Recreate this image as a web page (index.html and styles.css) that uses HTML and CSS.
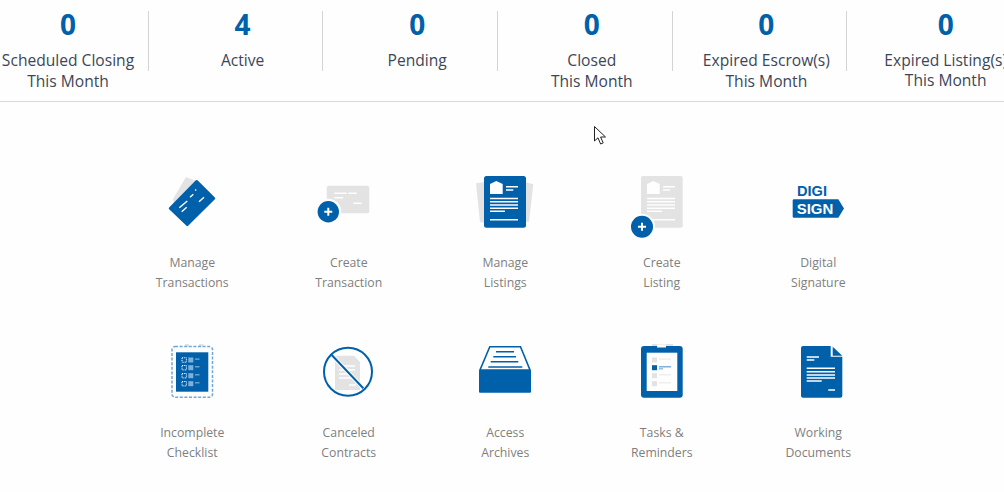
FILE: index.html
```html
<!DOCTYPE html>
<html lang="en">
<head>
<meta charset="utf-8">
<title>Dashboard</title>
<link rel="stylesheet" href="styles.css">
</head>
<body>
<header class="stats">
  <div class="stat"><div class="num">0</div><div class="lbl">Scheduled Closing<br>This Month</div></div>
  <div class="stat"><div class="num">4</div><div class="lbl">Active</div></div>
  <div class="stat"><div class="num">0</div><div class="lbl">Pending</div></div>
  <div class="stat"><div class="num">0</div><div class="lbl">Closed<br>This Month</div></div>
  <div class="stat"><div class="num">0</div><div class="lbl">Expired Escrow(s)<br>This Month</div></div>
  <div class="stat stat-last"><div class="num">0</div><div class="lbl">Expired Listing(s)<br>This Month</div></div>
</header>

<main class="tiles">
  <a class="tile">
    <svg class="ico" viewBox="0 0 60 70">
      <polygon class="g" points="24,5 34,9 12,33 11,27"/>
      <polygon class="b" stroke="#0060a9" stroke-width="2.4" stroke-linejoin="round" points="34.7,9.2 52,26.3 25.3,53 8,36.3"/>
      <g class="wl"><path d="M17.3 35.7L25.3 29M28 25.3L31.3 22.3M33.2 18.5L34.2 17.5M19.7 39.7L24.7 35.3M37 29.7L42 25.3"/></g>
    </svg>
    <span class="cap">Manage<br>Transactions</span>
  </a>
  <a class="tile">
    <svg class="ico" viewBox="0 0 60 70">
      <rect class="g" x="7.7" y="13.7" width="42.6" height="27.6" rx="2"/>
      <path class="wl" d="M15.3 21.3H27.7M29.3 21.3H37.7M15.3 25.7H24.3M34.3 31.3H42.7"/>
      <circle class="w" cx="9.3" cy="39.7" r="13"/>
      <circle class="b" cx="9.3" cy="39.7" r="10.7"/>
      <path class="plus" d="M5.3 39.7H13.3M9.3 35.7V43.7"/>
    </svg>
    <span class="cap">Create<br>Transaction</span>
  </a>
  <a class="tile">
    <svg class="ico" viewBox="0 0 60 70">
      <polygon class="g" points="1,11.3 10,10 10,51 5,50"/>
      <polygon class="g" points="58.3,12.3 50,10 50,50 54,49.7"/>
      <rect class="b" x="9" y="4" width="42" height="51.7" rx="2.5"/>
      <polygon class="w" points="15,12 21.3,9 27.7,12 27.7,22 15,22"/>
      <path class="wl" d="M31 14.7H43M31 18H38.3M15 26.5H43M15 29.7H43M15 33H43M15 36.3H43M15 39.3H30M15 47.7H43"/>
    </svg>
    <span class="cap">Manage<br>Listings</span>
  </a>
  <a class="tile">
    <svg class="ico" viewBox="0 0 60 70">
      <rect class="g" x="9" y="4" width="41.7" height="51.7" rx="2"/>
      <polygon class="w" points="15,12 21.3,9 27.7,12 27.7,22 15,22"/>
      <path class="wl" d="M31 14.7H43M31 18H38.3M15 26.5H43M15 29.7H43M15 33H43M15 36.3H43M15 39.3H30M15 47.7H43"/>
      <circle class="w" cx="10" cy="54.7" r="13"/>
      <circle class="b" cx="10" cy="54.7" r="11"/>
      <path class="plus" d="M6 54.7H14M10 50.7V58.7"/>
    </svg>
    <span class="cap">Create<br>Listing</span>
  </a>
  <a class="tile">
    <svg class="ico" viewBox="0 0 60 70">
      <text class="digi" x="9" y="24" textLength="30" lengthAdjust="spacingAndGlyphs">DIGI</text>
      <polygon class="b" points="5.5,27.3 50.3,27.3 56,36.5 50.3,45.8 5.5,45.8 4.7,45 4.7,28"/>
      <text class="sign" x="8.7" y="41.8" textLength="36.6" lengthAdjust="spacingAndGlyphs">SIGN</text>
    </svg>
    <span class="cap">Digital<br>Signature</span>
  </a>

  <a class="tile">
    <svg class="ico" viewBox="0 0 60 70">
      <rect class="g" x="23" y="2" width="18.3" height="2.7"/>
      <rect class="w" x="27" y="2" width="10" height="2.7"/>
      <rect class="dash" x="10" y="4.6" width="40.5" height="50.6" rx="3"/>
      <rect class="b" x="14" y="10.3" width="32.3" height="39.4"/>
      <g class="lb">
        <rect x="26.3" y="15.5" width="5" height="5"/><rect x="26.3" y="23.2" width="5" height="5"/>
        <rect x="26.3" y="31.2" width="5" height="5"/><rect x="26.3" y="39.2" width="5" height="5"/>
        <rect x="33" y="16.5" width="4.5" height="1.2"/><rect x="33" y="24.2" width="4.5" height="1.2"/>
        <rect x="33" y="32.2" width="4.5" height="1.2"/><rect x="33" y="40.2" width="4.5" height="1.2"/>
      </g>
      <g class="dots">
        <rect x="20" y="15.8" width="4.4" height="4.4"/><rect x="20" y="23.5" width="4.4" height="4.4"/>
        <rect x="20" y="31.5" width="4.4" height="4.4"/><rect x="20" y="39.5" width="4.4" height="4.4"/>
      </g>
    </svg>
    <span class="cap">Incomplete<br>Checklist</span>
  </a>
  <a class="tile">
    <svg class="ico" viewBox="0 0 60 70">
      <polygon class="g" points="16,13.7 35,13.7 41,20 41,48 16,48"/>
      <path class="wl" d="M20 24H36M20 28H36M20 32H30M20 36H36M30 43H37"/>
      <path class="halo" d="M12.7 13L44.3 46.3"/>
      <circle class="ring" cx="29" cy="29.7" r="24"/>
      <path class="slash" d="M12.7 13L44.3 46.3"/>
    </svg>
    <span class="cap">Canceled<br>Contracts</span>
  </a>
  <a class="tile">
    <svg class="ico" viewBox="0 0 60 70">
      <polygon class="outline" points="14.8,4.8 45.5,4.8 55,28 5,28"/>
      <rect class="b" x="4" y="28" width="52" height="22.7" rx="1"/>
      <path class="bl" d="M21 9.7H39M18.3 14.7H41M15.7 19.7H43.3M13.3 25H47.3"/>
    </svg>
    <span class="cap">Access<br>Archives</span>
  </a>
  <a class="tile">
    <svg class="ico" viewBox="0 0 60 70">
      <rect class="g" x="20" y="2" width="21" height="3"/>
      <rect class="b" x="9" y="4" width="41.7" height="51.7" rx="3"/>
      <rect class="w" x="25" y="2.5" width="9" height="3"/>
      <rect class="w" x="14.7" y="10.7" width="30.6" height="38.3"/>
      <rect class="g" x="20" y="15.5" width="5" height="5"/><rect class="b" x="20" y="23.2" width="5" height="5"/>
      <rect class="g" x="20" y="31.2" width="5" height="5"/><rect class="g" x="20" y="39.2" width="5" height="5"/>
      <rect class="ltg" x="27" y="16.5" width="12" height="1.2"/><rect class="lb" x="27" y="24" width="12" height="1.5"/>
      <rect class="lb" x="27" y="26.2" width="4" height="1.2"/><rect class="ltg" x="27" y="32.2" width="12" height="1.2"/>
      <rect class="ltg" x="27" y="40.2" width="12" height="1.2"/>
    </svg>
    <span class="cap">Tasks &amp;<br>Reminders</span>
  </a>
  <a class="tile">
    <svg class="ico" viewBox="0 0 60 70">
      <path class="b" d="M15 4H42.7V14.7H54.3V53.7a2 2 0 0 1-2 2H15a2 2 0 0 1-2-2V6a2 2 0 0 1 2-2Z"/>
      <polygon class="b" points="44.7,4.7 54.3,13.7 44.7,13.7"/>
      <path class="wl" d="M18.7 15H31M18.7 18H26.3M18.7 26.3H47M18.7 29.7H47M18.7 33H47M18.7 36H47M18.7 39H33.7M40.3 48H47"/>
    </svg>
    <span class="cap">Working<br>Documents</span>
  </a>
</main>

<svg class="cursor" viewBox="0 0 14 20"><path d="M.5.5V15L4 11.8 6.6 18 9.2 16.9 6.6 11H11.5Z"/></svg>
</body>
</html>
```
FILE: styles.css
```css
html, body { margin: 0; padding: 0; }
body {
  width: 1004px;
  height: 492px;
  overflow: hidden;
  position: relative;
  background: #fefefe;
  font-family: "Open Sans", "Noto Sans", sans-serif;
}
.stats {
  display: flex;
  height: 90px;
  padding-top: 11px;
  box-sizing: content-box;
  margin-left: -25.8px;
  width: 1029.8px;
  border-bottom: 1px solid #d6d8da;
}
.stat {
  flex: 0 0 174.6px;
  box-sizing: border-box;
  height: 60px;
  padding-left: 14px;
  border-right: 1px solid #d4d4d4;
  text-align: center;
  white-space: nowrap;
}
.stat-last {
  flex: 0 0 197px;
  border-right: 0;
  padding-left: 0;
}
.stat-last .lbl { line-height: 20px; }
.num {
  font-size: 28px;
  line-height: 26px;
  font-weight: 700;
  color: #0060a9;
}
.lbl {
  margin-top: 13px;
  font-size: 15.6px;
  line-height: 21px;
  font-weight: 500;
  color: #3c4658;
}
.tiles {
  display: grid;
  grid-template-columns: repeat(5, 156.5px);
  row-gap: 49px;
  margin: 70px 0 0 114px;
}
.tile {
  display: flex;
  flex-direction: column;
  align-items: center;
  gap: 11px;
}
.ico { width: 60px; height: 70px; overflow: visible; display: block; }
.cap {
  font-size: 12.25px;
  line-height: 20px;
  text-align: center;
  color: #7e7f80;
}
.b { fill: #0060a9; }
.g { fill: #e3e3e3; }
.w { fill: #fefefe; }
.ltg { fill: #ececec; }
.lb, .lb rect { fill: #7fb0da; }
.wl { fill: none; stroke: #fefefe; stroke-width: 1.4; }
.bl { fill: none; stroke: #0060a9; stroke-width: 1.6; }
.plus { fill: none; stroke: #fefefe; stroke-width: 2; }
.dash { fill: none; stroke: #6fa8d8; stroke-width: 1.5; stroke-dasharray: 3 1.6; }
.dots rect { fill: none; stroke: #fefefe; stroke-width: 1; stroke-dasharray: 1 .8; }
.ring { fill: none; stroke: #0060a9; stroke-width: 2; }
.slash { fill: none; stroke: #0060a9; stroke-width: 2; }
.halo { fill: none; stroke: #fefefe; stroke-width: 4; }
.outline { fill: #fefefe; stroke: #0060a9; stroke-width: 1.6; }
.digi { font: 700 14.5px "Liberation Sans", sans-serif; fill: #0060a9; }
.sign { font: 700 15px "Liberation Sans", sans-serif; fill: #fefefe; }
.cursor {
  position: absolute;
  left: 594px;
  top: 126px;
  width: 14px;
  height: 20px;
  fill: #fff;
  stroke: #222;
  stroke-width: 1;
}
```
